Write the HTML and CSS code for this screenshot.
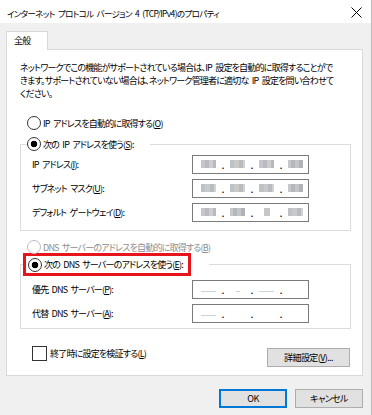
FILE: index.html
```html
<!DOCTYPE html>
<html lang="ja">
<head>
  <meta charset="UTF-8" />
  <meta name="viewport" content="width=device-width, initial-scale=1.0"/>
  <title>インターネット プロトコル バージョン 4 (TCP/IPv4)のプロパティ</title>
  <link rel="stylesheet" href="styles.css">
</head>
<body>
  <div class="window">
    <div class="titlebar">
      <span class="title">インターネット プロトコル バージョン 4 (TCP/IPv4)のプロパティ</span>
      <svg class="close" width="11" height="11" viewBox="0 0 11 11" aria-hidden="true">
        <path d="M0.5 0.5L10.5 10.5M10.5 0.5L0.5 10.5" stroke="#000" stroke-width="1" fill="none"/>
      </svg>
    </div>

    <div class="content">
      <div class="tab">全般</div>
      <div class="panel">
        <p class="desc">ネットワークでこの機能がサポートされている場合は、IP 設定を自動的に取得することがで<br>きます。サポートされていない場合は、ネットワーク管理者に適切な IP 設定を問い合わせて<br>ください。</p>

        <div class="radio option">IP アドレスを自動的に取得する(<u>O</u>)</div>

        <fieldset class="group">
          <legend class="legend-ip"><span class="radio checked">次の IP アドレスを使う(<u>S</u>):</span></legend>
          <div class="rows rows-ip">
            <div class="row">
              <span>IP アドレス(<u>I</u>):</span>
              <div class="ip">
                <span class="blk b1"></span><span class="sep">.</span><span class="blk b2"></span><span class="sep">.</span><span class="blk b1"></span><span class="sep">.</span><span class="blk b3"></span>
              </div>
            </div>
            <div class="row">
              <span>サブネット マスク(<u>U</u>):</span>
              <div class="ip">
                <span class="blk b2"></span><span class="sep">.</span><span class="blk b2"></span><span class="sep">.</span><span class="blk b2"></span><span class="sep">.</span><span class="blk b3"></span>
              </div>
            </div>
            <div class="row">
              <span>デフォルト ゲートウェイ(<u>D</u>):</span>
              <div class="ip">
                <span class="blk b1"></span><span class="sep">.</span><span class="blk b3"></span><span class="sep">.</span><span class="blk small"></span><span class="sep">.</span><span class="blk b2"></span>
              </div>
            </div>
          </div>
        </fieldset>

        <div class="radio option disabled">DNS サーバーのアドレスを自動的に取得する(<u>B</u>)</div>

        <fieldset class="group">
          <legend class="legend-dns"><span class="highlight"><span class="radio checked">次の DNS サーバーのアドレスを使う(<u>E</u>):</span></span></legend>
          <div class="rows rows-dns">
            <div class="row">
              <span>優先 DNS サーバー(<u>P</u>):</span>
              <div class="ip">
                <span class="blk line"></span><span class="sep">.</span><span class="blk line short"></span><span class="sep">.</span><span class="blk line"></span><span class="sep">.</span><span class="blk"></span>
              </div>
            </div>
            <div class="row">
              <span>代替 DNS サーバー(<u>A</u>):</span>
              <div class="ip">
                <span class="blk line"></span><span class="sep">.</span><span class="blk"></span><span class="sep">.</span><span class="blk"></span><span class="sep">.</span><span class="blk"></span>
              </div>
            </div>
          </div>
        </fieldset>

        <div class="footer-row">
          <div class="check">終了時に設定を検証する(<u>L</u>)</div>
          <button type="button" class="btn btn-wide">詳細設定(<u>V</u>)...</button>
        </div>
      </div>

      <div class="actions">
        <button type="button" class="btn btn-default">OK</button>
        <button type="button" class="btn">キャンセル</button>
      </div>
    </div>
  </div>
</body>
</html>
```

FILE: styles.css
```css
* {
  box-sizing: border-box;
}
body {
  margin: 0;
  font-family: "Noto Sans CJK JP", sans-serif;
  font-size: 9px;
  letter-spacing: -0.8px;
  word-spacing: 2px;
  font-feature-settings: "palt";
  color: #000;
  background: #f0f0f0;
}
u {
  text-decoration-thickness: 1px;
  text-underline-offset: 1px;
}
.window {
  width: 372px;
  height: 415px;
  background: #f0f0f0;
  border-right: 1px solid #bdbdbd;
}
.titlebar {
  height: 23px;
  background: #fff;
  display: flex;
  align-items: center;
  justify-content: space-between;
  padding: 2px 9px 0 7px;
}
.title {
  font-size: 8.5px;
  letter-spacing: -0.65px;
}
.close {
  display: block;
}
.content {
  padding: 8px 8px 0 6px;
}
.tab {
  width: 42px;
  height: 19px;
  padding-left: 7px;
  line-height: 18px;
  background: #fff;
  border: 1px solid #d9d9d9;
  border-bottom: none;
  margin-bottom: -1px;
  position: relative;
  z-index: 1;
}
.panel {
  height: 327px;
  background: #fff;
  border: 1px solid #d9d9d9;
  padding: 11px 11px 0 13px;
}
.desc {
  margin: 0;
  line-height: 13px;
  white-space: nowrap;
}

/* radio buttons */
.radio {
  display: flex;
  align-items: center;
  white-space: pre;
}
.radio::before {
  content: "";
  width: 12px;
  height: 12px;
  margin-right: 2px;
  border: 1px solid #333;
  border-radius: 50%;
  background: #fff;
  flex: none;
}
.radio.checked::before {
  background: radial-gradient(circle, #000 0 3px, #fff 3.6px);
}
.option {
  height: 16px;
  margin-top: 15px;
  padding-left: 7px;
}
.option.disabled {
  height: 14px;
  margin-top: 9px;
  color: #8d8d8d;
}
.option.disabled::before {
  border-color: #bcbcbc;
}

/* group boxes */
.group {
  margin: 0;
  padding: 0;
  border: 1px solid #dcdcdc;
  min-width: 0;
}
.legend-ip {
  height: 16px;
  margin-left: 6px;
  padding: 0 16px 0 0;
}
.legend-ip .radio {
  height: 16px;
}
.group:first-of-type {
  margin-top: 5px;
}
.legend-dns {
  margin-left: 2px;
  padding: 0 18px 0 0;
}
.highlight {
  display: block;
  border: 3px solid #e8141c;
  padding: 1px 5px 1px 2px;
  height: 23px;
}
.highlight .radio {
  height: 15px;
}
.group:last-of-type {
  margin-top: -1px;
}
.rows {
  display: grid;
  padding: 0 41px 6px 11px;
}
.rows-dns {
  padding-top: 1px;
  padding-bottom: 3px;
}
.row {
  height: 24px;
  display: flex;
  align-items: center;
  justify-content: space-between;
  white-space: nowrap;
}

/* ip address boxes */
.ip {
  width: 117px;
  height: 19px;
  border: 1px solid #7a7a7a;
  background: #fff;
  display: flex;
  align-items: center;
  padding-left: 8px;
  font-size: 11px;
  letter-spacing: 0;
}
.blk {
  width: 15px;
  height: 8px;
}
.b1 {
  background: linear-gradient(90deg, #c9c5cb 0 25%, #b7bcc2 25% 55%, #cfcdd0 55% 80%, #b9b9bd 80%);
}
.b2 {
  background: linear-gradient(90deg, #bdc2c7 0 30%, #cacaca 30% 60%, #b8bbbf 60% 85%, #d2d2d2 85%);
}
.b3 {
  background: linear-gradient(90deg, #c8c8cb 0 20%, #b3b8bd 20% 50%, #c7c5c9 50% 75%, #aeb3b8 75%);
}
.blk.small {
  background: linear-gradient(90deg, #fff 0 30%, #c6c6c9 30% 70%, #fff 70%);
}
.blk.line {
  height: 1px;
  margin-top: 4px;
  background: #c9d3de;
}
.blk.line.short {
  background: linear-gradient(90deg, #fff 0 40%, #c9d3de 40% 70%, #fff 70%);
}
.sep {
  width: 14px;
  text-align: center;
  line-height: 1;
}

/* bottom of the panel */
.footer-row {
  display: flex;
  align-items: flex-start;
  justify-content: space-between;
  margin-top: 16px;
  padding-right: 1px;
}
.check {
  display: flex;
  align-items: center;
  height: 16px;
  padding-left: 12px;
  white-space: nowrap;
}
.check::before {
  content: "";
  width: 13px;
  height: 13px;
  margin-right: 3px;
  border: 1px solid #333;
  background: #fff;
}
.btn {
  height: 19px;
  padding: 0;
  font-family: inherit;
  font-size: 9px;
  letter-spacing: -0.6px;
  font-feature-settings: "palt";
  color: #000;
  background: #e1e1e1;
  border: 1px solid #adadad;
  border-radius: 0;
}
.btn-wide {
  width: 83px;
  margin-top: 3px;
}
.actions {
  display: flex;
  justify-content: flex-end;
  gap: 8px;
  margin-top: 13px;
}
.actions .btn {
  width: 68px;
}
.btn-default {
  border: 2px solid #0078d7;
}
```
